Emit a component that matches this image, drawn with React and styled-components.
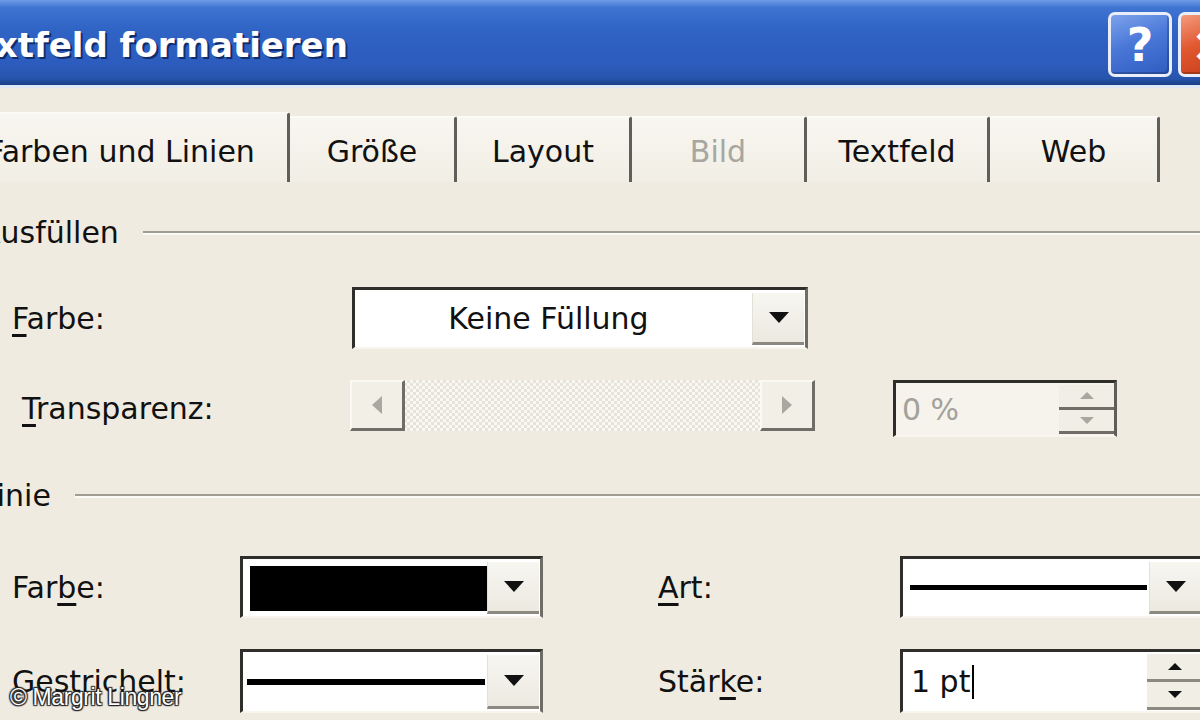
import React from 'react'
import styled, { createGlobalStyle } from 'styled-components'

const GlobalStyle = createGlobalStyle`
  html, body {
    margin: 0;
    padding: 0;
    background: #efebe0;
  }
  * { box-sizing: border-box; }
`

const Screen = styled.div`
  position: relative;
  width: 1200px;
  height: 720px;
  overflow: hidden;
  background: #efebe0;
  font-family: "DejaVu Sans", Tahoma, sans-serif;
  font-size: 30px;
  color: #111;
`

// dialog starts left of the visible crop, so the first letters get cut
const Dialog = styled.div`
  margin-left: -60px;
  width: 1320px;
`

const TitleBar = styled.div`
  height: 88px;
  display: flex;
  align-items: center;
  justify-content: space-between;
  padding: 0 18px 0 14px;
  background: linear-gradient(180deg, #6d9be6 0%, #3f74d2 9%, #2f63c4 35%, #2c5cbd 75%, #2755ad 92%, #1b3f86 100%);
  border-bottom: 3px solid #dfe8f5;
`

const Title = styled.div`
  font-family: "DejaVu Sans", sans-serif;
  font-weight: bold;
  font-size: 34px;
  color: #fff;
  text-shadow: 2px 2px 0 #0f2c6b;
  margin-top: 4px;
`

const TitleButtons = styled.div`
  display: flex;
  gap: 6px;
  margin-top: 4px;
`

const CaptionButton = styled.div`
  width: 64px;
  height: 65px;
  border-radius: 7px;
  border: 3px solid #e9eef8;
  display: flex;
  align-items: center;
  justify-content: center;
  color: #fff;
  font-weight: bold;
  font-size: 46px;
  font-family: "DejaVu Sans", sans-serif;
  background: ${({ $red }) => $red
    ? 'linear-gradient(160deg, #f39a7c 0%, #e1572f 45%, #c23b16 100%)'
    : 'linear-gradient(160deg, #7da3ec 0%, #4a78d8 45%, #2f5bc0 100%)'};
  box-shadow: inset -2px -2px 0 rgba(0,0,0,0.2);
`

const Body = styled.div`
  padding-top: 24px;
`

const TabStrip = styled.div`
  display: flex;
  padding-left: 15px;
  height: 70px;
`

const Tab = styled.div`
  width: ${({ $w }) => $w}px;
  height: ${({ $active }) => ($active ? 70 : 66)}px;
  margin-top: ${({ $active }) => ($active ? 0 : 4)}px;
  display: flex;
  align-items: center;
  justify-content: center;
  padding-top: ${({ $active }) => ($active ? 6 : 2)}px;
  color: ${({ $disabled }) => ($disabled ? '#a7a6a0' : '#111')};
  background: linear-gradient(180deg, #f8f6f0 0%, #f1eee5 100%);
  border-top: 2px solid #fbfaf5;
  border-right: 3px solid #5f5e58;
  border-top-right-radius: 3px;
`

const Section = styled.div`
  display: flex;
  align-items: center;
  gap: 24px;
  padding-left: 40px;
  height: 36px;
  margin-top: ${({ $top }) => $top}px;
`

const SectionLine = styled.div`
  flex: 1;
  height: 4px;
  border-top: 2px solid #a09d92;
  border-bottom: 2px solid #fbfaf6;
  margin-top: 2px;
`

const Row = styled.div`
  display: flex;
  align-items: ${({ $align }) => $align || 'center'};
  padding-left: 72px;
  margin-top: ${({ $top }) => $top}px;
`

const Label = styled.div`
  width: ${({ $w }) => $w}px;
  padding-left: ${({ $indent }) => $indent || 0}px;
  margin-left: ${({ $gap }) => $gap || 0}px;
  flex-shrink: 0;
  align-self: center;

  u {
    text-decoration-thickness: 3px;
    text-underline-offset: 5px;
  }
`

const Dropdown = styled.div`
  width: ${({ $w }) => $w}px;
  height: ${({ $h }) => $h}px;
  flex-shrink: 0;
  display: flex;
  background: #fff;
  border-top: 3px solid #2f2e2a;
  border-left: 3px solid #2f2e2a;
  border-right: 3px solid #6e6c64;
  border-bottom: 2px solid #f7f5ee;
`

const Field = styled.div`
  flex: 1;
  display: flex;
  align-items: center;
  justify-content: ${({ $center }) => ($center ? 'center' : 'flex-start')};
  padding: ${({ $pad }) => $pad || '0 8px'};
  color: ${({ $muted }) => ($muted ? '#a3a19a' : '#111')};
`

const Swatch = styled.div`
  width: 100%;
  height: 100%;
  background: #000;
`

const Stroke = styled.div`
  width: 100%;
  height: ${({ $t }) => $t}px;
  background: #000;
`

const ArrowButton = styled.div`
  width: 52px;
  margin: 3px 1px 2px 0;
  display: flex;
  align-items: center;
  justify-content: center;
  background: linear-gradient(180deg, #f7f6f1 0%, #ece9e0 100%);
  border-left: 1px solid #e3e0d6;
  border-bottom: 3px solid #8b8980;

  &::after {
    content: '';
    border-left: 10px solid transparent;
    border-right: 10px solid transparent;
    border-top: 11px solid #111;
  }
`

const Slider = styled.div`
  width: 465px;
  height: 51px;
  flex-shrink: 0;
  display: flex;
  background: repeating-conic-gradient(#e7e3d8 0 25%, #faf8f3 0 50%) 0 0 / 6px 6px;
`

const SlideButton = styled.div`
  width: 55px;
  display: flex;
  align-items: center;
  justify-content: center;
  background: #f2efe6;
  border-top: 2px solid #faf9f4;
  border-left: 2px solid #faf9f4;
  border-right: 3px solid #6f6d66;
  border-bottom: 3px solid #6f6d66;

  &::after {
    content: '';
    border-top: 9px solid transparent;
    border-bottom: 9px solid transparent;
    ${({ $dir }) => ($dir === 'left'
      ? 'border-right: 10px solid #a9a7a0;'
      : 'border-left: 10px solid #a9a7a0;')}
  }
`

const Track = styled.div`
  flex: 1;
`

const SpinBox = styled.div`
  width: ${({ $w }) => $w}px;
  height: ${({ $h }) => $h}px;
  margin-left: ${({ $gap }) => $gap || 0}px;
  flex-shrink: 0;
  display: flex;
  background: ${({ $disabled }) => ($disabled ? '#f5f3ec' : '#fff')};
  border-top: 3px solid #2f2e2a;
  border-left: 3px solid #2f2e2a;
  border-right: 3px solid #5f5d57;
  border-bottom: 2px solid #f7f5ee;
`

const Spinner = styled.div`
  width: 55px;
  display: flex;
  flex-direction: column;
  margin: 2px 0 1px 0;
`

const SpinHalf = styled.div`
  flex: 1;
  display: flex;
  align-items: center;
  justify-content: center;
  background: #f1eee6;
  border-bottom: 3px solid ${({ $disabled }) => ($disabled ? '#6f6d66' : '#8b8980')};

  &::after {
    content: '';
    border-left: 7px solid transparent;
    border-right: 7px solid transparent;
    ${({ $up, $disabled }) => {
      const c = $disabled ? '#a9a7a0' : '#111'
      return $up ? `border-bottom: 7px solid ${c};` : `border-top: 7px solid ${c};`
    }}
  }
`

const Caret = styled.span`
  display: inline-block;
  width: 2px;
  height: 34px;
  margin-left: 2px;
  background: #000;
  vertical-align: middle;
`

const Watermark = styled.div`
  position: absolute;
  left: 10px;
  bottom: 9px;
  font-family: "Liberation Sans", Arial, sans-serif;
  font-size: 23px;
  color: #fff;
  letter-spacing: -0.4px;
  text-shadow: 0 0 2px #222, 1px 1px 1px #222, -1px -1px 1px #222, 1px -1px 1px #222, -1px 1px 1px #222;
`

const tabs = [
  { name: 'Farben und Linien', w: 335, active: true },
  { name: 'Größe', w: 167 },
  { name: 'Layout', w: 175 },
  { name: 'Bild', w: 175, disabled: true },
  { name: 'Textfeld', w: 183 },
  { name: 'Web', w: 170 },
]

export default function App() {
  return (
    <Screen>
      <GlobalStyle />
      <Dialog>
        <TitleBar>
          <Title>Textfeld formatieren</Title>
          <TitleButtons>
            <CaptionButton>?</CaptionButton>
            <CaptionButton $red>×</CaptionButton>
          </TitleButtons>
        </TitleBar>

        <Body>
          <TabStrip>
            {tabs.map(t => (
              <Tab key={t.name} $w={t.w} $active={t.active} $disabled={t.disabled}>
                {t.name}
              </Tab>
            ))}
          </TabStrip>

          <Section $top={32}>
            <span>Ausfüllen</span>
            <SectionLine />
          </Section>

          <Row $top={37}>
            <Label $w={340}><u>F</u>arbe:</Label>
            <Dropdown $w={456} $h={62}>
              <Field $center $pad="0 10px 0 0">Keine Füllung</Field>
              <ArrowButton />
            </Dropdown>
          </Row>

          <Row $top={31} $align="flex-start">
            <Label $w={338} $indent={10}><u>T</u>ransparenz:</Label>
            <Slider>
              <SlideButton $dir="left" />
              <Track />
              <SlideButton $dir="right" />
            </Slider>
            <SpinBox $w={224} $h={57} $gap={78} $disabled>
              <Field $muted $pad="0 0 0 6px">0 %</Field>
              <Spinner>
                <SpinHalf $up $disabled />
                <SpinHalf $disabled />
              </Spinner>
            </SpinBox>
          </Row>

          <Section $top={40}>
            <span>Linie</span>
            <SectionLine />
          </Section>

          <Row $top={43}>
            <Label $w={228}>Far<u>b</u>e:</Label>
            <Dropdown $w={303} $h={62}>
              <Field $pad="7px 0 5px 7px"><Swatch /></Field>
              <ArrowButton />
            </Dropdown>
            <Label $w={242} $gap={115}><u>A</u>rt:</Label>
            <Dropdown $w={305} $h={62}>
              <Field $pad="0 2px 0 7px"><Stroke $t={5} /></Field>
              <ArrowButton />
            </Dropdown>
          </Row>

          <Row $top={31}>
            <Label $w={228}>Gestrichelt:</Label>
            <Dropdown $w={303} $h={64}>
              <Field $pad="0 2px 0 4px"><Stroke $t={6} /></Field>
              <ArrowButton />
            </Dropdown>
            <Label $w={242} $gap={115}>Stär<u>k</u>e:</Label>
            <SpinBox $w={305} $h={64}>
              <Field $pad="0 0 0 8px">1 pt<Caret /></Field>
              <Spinner>
                <SpinHalf $up />
                <SpinHalf />
              </Spinner>
            </SpinBox>
          </Row>
        </Body>
      </Dialog>
      <Watermark>© Margrit Lingner</Watermark>
    </Screen>
  )
}
